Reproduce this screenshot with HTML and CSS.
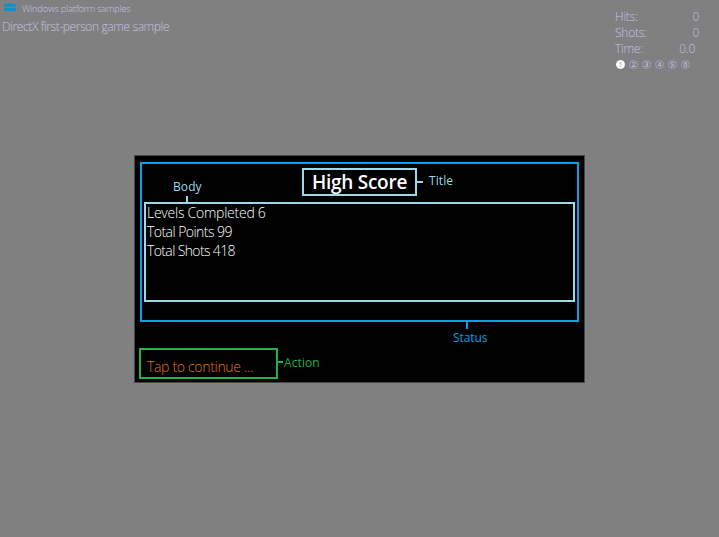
FILE: index.html
```html
<!DOCTYPE html>
<html lang="en">
<head>
<meta charset="utf-8">
<title>DirectX first-person game sample</title>
<link rel="stylesheet" href="styles.css">
</head>
<body>
<div class="screen">
  <header class="hud">
    <div class="heading">
      <div class="brand">
        <svg class="brand-icon" width="12" height="9" viewBox="0 0 12 9"><path d="M4 1V.5h4V1" fill="none" stroke="#168fc4"/><path d="M0 1h12v2.5H0zM0 5h12v3H0z" fill="#0e90c8"/><path d="M0 4.25h12" stroke="#5a8699"/></svg>
        <span class="brand-name">Windows platform samples</span>
      </div>
      <div class="sample-name"><span>DirectX first-person game sample</span></div>
    </div>
    <div class="stats">
      <div class="stat"><span>Hits:</span><span>0</span></div>
      <div class="stat"><span>Shots:</span><span>0</span></div>
      <div class="stat time"><span>Time:</span><span>0.0</span></div>
      <div class="levels"><i class="level current">1</i><i class="level">2</i><i class="level">3</i><i class="level">4</i><i class="level">5</i><i class="level">6</i></div>
    </div>
  </header>
  <main class="panel">
    <section class="status">
      <h1 class="title"><span>High Score</span><b class="callout title-callout">Title</b></h1>
      <div class="body">
        <b class="callout body-callout">Body</b>
        <p class="line levels-line">Levels Completed 6</p>
        <p class="line">Total Points 99</p>
        <p class="line shots-line">Total Shots 418</p>
      </div>
      <b class="callout status-callout">Status</b>
    </section>
    <div class="action"><span>Tap to continue ...</span><b class="callout action-callout">Action</b></div>
  </main>
</div>
</body>
</html>
```
FILE: styles.css
```css
* { box-sizing: border-box; }
body { margin: 0; background: #808080; font-family: "Open Sans", "Noto Sans", sans-serif; }
.screen { width: 719px; height: 537px; overflow: hidden; }
.hud { display: flex; justify-content: space-between; height: 155px; color: #c4c1e2; font-weight: 300; }
.brand { display: flex; align-items: flex-start; gap: 6px; padding: 3px 0 0 4px; height: 18px; }
.brand-name { font-size: 9.5px; line-height: 12px; letter-spacing: -0.3px; white-space: nowrap; }
.sample-name { padding-left: 2px; font-size: 12px; line-height: 18px; letter-spacing: -0.38px; white-space: nowrap; }
.stats { width: 84px; margin-right: 20px; padding-top: 9px; }
.stat { display: flex; justify-content: space-between; height: 16px; font-size: 12px; line-height: 16px; letter-spacing: -0.25px; }
.time { padding-right: 4px; }
.levels { display: flex; gap: 4px; padding: 3px 0 0 1px; }
.level { width: 9px; height: 9px; border: 1px solid #a19fbe; border-radius: 50%; font: 600 7px/7px "Open Sans", sans-serif; text-align: center; color: #c0bee0; }
.current { background: #fff; border-color: #fff; color: #aaa8d0; }
.panel { width: 451px; height: 228px; margin-left: 134px; padding: 6px 4px 0 5px; background: #000; border: 1px solid #45454b; }
.status { position: relative; width: 439px; height: 160px; padding: 4px 2px 0; border: 2px solid #00a2e8; }
.title { position: relative; width: 115px; height: 28px; margin: 0 auto; border: 2px solid #99d9ea; color: #fff; font-size: 19px; font-weight: 600; line-height: 24px; letter-spacing: -0.25px; text-align: center; }
.body { position: relative; width: 431px; height: 100px; margin-top: 6px; border: 2px solid #99d9ea; padding-left: 1px; }
.line { margin: 0; height: 19px; color: #fff; font-size: 14px; font-weight: 300; line-height: 17px; letter-spacing: -0.55px; }
.levels-line { letter-spacing: -0.25px; }
.shots-line { letter-spacing: -0.63px; }
.action { position: relative; width: 139px; height: 31px; margin: 26px 0 0 -1px; padding: 8px 0 0 6px; border: 2px solid #22b14c; color: #e67a0c; font-size: 14px; font-weight: 300; line-height: 18px; letter-spacing: -0.32px; }
.callout { position: absolute; font-size: 12px; font-weight: 400; line-height: 16px; letter-spacing: 0.1px; white-space: nowrap; }
.callout::before { content: ""; position: absolute; background: currentColor; }
.title-callout { left: 125px; top: 3px; color: #99d9ea; }
.title-callout::before { left: -12px; top: 8px; width: 6px; height: 2px; }
.body-callout { left: 27px; top: -25px; color: #99d9ea; }
.body-callout::before { left: 13px; top: 17px; width: 2px; height: 6px; }
.status-callout { left: 311px; top: 166px; color: #00a2e8; letter-spacing: -0.1px; }
.status-callout::before { left: 13px; top: -8px; width: 2px; height: 7px; }
.action-callout { left: 143px; top: 5px; color: #22b14c; }
.action-callout::before { left: -6px; top: 6px; width: 5px; height: 2px; }
```
